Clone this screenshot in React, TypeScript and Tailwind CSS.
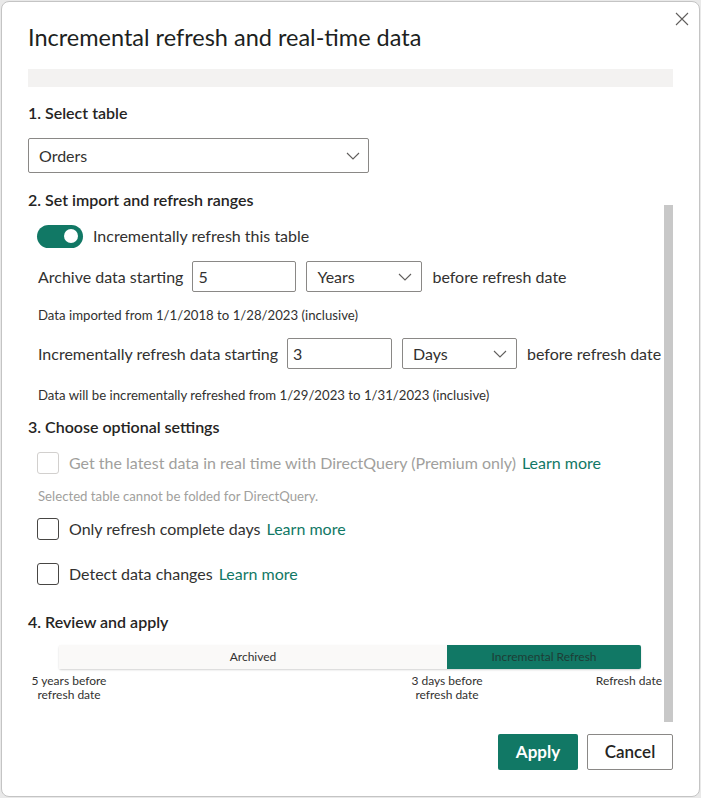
import React from 'react';

const font = { fontFamily: 'Lato, "Noto Sans", sans-serif' };

function Chevron() {
  return (
    <svg width="14" height="8" viewBox="0 0 14 8" className="text-[#605e5c]" aria-hidden="true">
      <path d="M1 1l6 6 6-6" fill="none" stroke="currentColor" strokeWidth="1.1" />
    </svg>
  );
}

function Select({ value, w }: { value: string; w: string }) {
  return (
    <div className={`${w} h-[31px] border border-[#8a8886] rounded-[2px] flex items-center justify-between pl-[10px] pr-[9px] text-[16px] text-[#323130]`}>
      <span>{value}</span>
      <Chevron />
    </div>
  );
}

function NumInput({ value, w }: { value: string; w: string }) {
  return (
    <div className={`${w} h-[31px] border border-[#8a8886] rounded-[2px] flex items-center pl-[5px] text-[16px] text-[#323130]`}>
      {value}
    </div>
  );
}

function Checkbox({ disabled }: { disabled?: boolean }) {
  return (
    <div
      className={`w-[22px] h-[22px] rounded-[3px] border shrink-0 ${
        disabled ? 'border-[#d2d0ce]' : 'border-[#484644]'
      }`}
    />
  );
}

function LearnMore() {
  return <span className="text-[#117865] ml-[6px]">Learn more</span>;
}

export default function App() {
  return (
    <div className="w-[701px] h-[798px] bg-[#e9e9e9] p-px" style={font}>
      <div className="relative w-[699px] h-[796px] bg-white border border-[#c4c4c4] rounded-[8px] pl-[26px] text-[#252423]">
        {/* close */}
        <button className="absolute top-[8px] right-[8px] w-[18px] h-[18px] flex items-center justify-center text-[#605e5c]">
          <svg width="14" height="14" viewBox="0 0 14 14" aria-hidden="true">
            <path d="M1 1l12 12M13 1L1 13" stroke="currentColor" strokeWidth="1.1" />
          </svg>
        </button>

        {/* scrollbar thumb */}
        <div className="absolute top-[203px] left-[662px] w-[9px] h-[517px] bg-[#c8c8c8]" />

        <h1 className="mt-[21px] text-[23.5px] leading-[28px] text-[#201f1e]">Incremental refresh and real-time data</h1>
        <div className="mt-[18px] w-[645px] h-[18px] bg-[#f3f2f1]" />

        {/* 1 */}
        <h2 className="mt-[14px] text-[16px] leading-[24px] font-semibold text-[#252423]">1. Select table</h2>
        <div className="mt-[13px] w-[341px] h-[35px] border border-[#8a8886] rounded-[2px] flex items-center justify-between pl-[10px] pr-[8px] text-[16px] text-[#323130]">
          <span>Orders</span>
          <Chevron />
        </div>

        {/* 2 */}
        <h2 className="mt-[15px] text-[16px] leading-[24px] font-semibold">2. Set import and refresh ranges</h2>
        <div className="mt-[12px] ml-[9px] h-[24px] flex items-center gap-[10px] text-[16px] text-[#323130]">
          <div className="w-[46px] h-[23px] rounded-full bg-[#117865] flex items-center justify-end pr-[5px]">
            <div className="w-[14px] h-[14px] rounded-full bg-white" />
          </div>
          <span>Incrementally refresh this table</span>
        </div>

        <div className="mt-[13px] ml-[10px] h-[31px] flex items-center text-[16px] text-[#323130]">
          <span className="mr-[9px]">Archive data starting</span>
          <NumInput value="5" w="w-[104px]" />
          <div className="ml-[10px]"><Select value="Years" w="w-[116px]" /></div>
          <span className="ml-[10px]">before refresh date</span>
        </div>
        <p className="mt-[13px] ml-[10px] text-[13.2px] leading-[20px] text-[#323130]">Data imported from 1/1/2018 to 1/28/2023 (inclusive)</p>

        <div className="mt-[13px] ml-[10px] h-[31px] flex items-center text-[16px] text-[#323130]">
          <span className="mr-[9px]">Incrementally refresh data starting</span>
          <NumInput value="3" w="w-[105px]" />
          <div className="ml-[10px]"><Select value="Days" w="w-[115px]" /></div>
          <span className="ml-[10px]">before refresh date</span>
        </div>
        <p className="mt-[16px] ml-[10px] text-[13.2px] leading-[20px] text-[#323130]">Data will be incrementally refreshed from 1/29/2023 to 1/31/2023 (inclusive)</p>

        {/* 3 */}
        <h2 className="mt-[10px] text-[16px] leading-[24px] font-semibold">3. Choose optional settings</h2>
        <div className="mt-[13px] ml-[9px] h-[22px] flex items-center text-[16px]">
          <Checkbox disabled />
          <span className="ml-[10px] text-[#a19f9d]">Get the latest data in real time with DirectQuery (Premium only)</span>
          <LearnMore />
        </div>
        <p className="mt-[12px] ml-[10px] text-[13.2px] leading-[20px] text-[#a19f9d]">Selected table cannot be folded for DirectQuery.</p>
        <div className="mt-[12px] ml-[9px] h-[22px] flex items-center text-[16px] text-[#323130]">
          <Checkbox />
          <span className="ml-[10px]">Only refresh complete days</span>
          <LearnMore />
        </div>
        <div className="mt-[23px] ml-[9px] h-[22px] flex items-center text-[16px] text-[#323130]">
          <Checkbox />
          <span className="ml-[10px]">Detect data changes</span>
          <LearnMore />
        </div>

        {/* 4 */}
        <h2 className="mt-[25px] text-[16px] leading-[24px] font-semibold">4. Review and apply</h2>
        <div className="mt-[11px] ml-[31px] w-[582px] h-[24px] flex text-[12px] shadow-[0_1px_2px_rgba(0,0,0,0.18)] rounded-[2px]">
          <div className="w-[388px] bg-[#faf9f8] flex items-center justify-center text-[#323130]">Archived</div>
          <div className="flex-1 bg-[#117865] flex items-center justify-center text-[#1e3d36] rounded-r-[2px]">Incremental Refresh</div>
        </div>
        <div className="mt-[5px] w-[634px] flex text-[12px] leading-[14px] text-[#323130]">
          <div className="w-[82px] text-center">5 years before<br />refresh date</div>
          <div className="ml-[296px] w-[82px] text-center">3 days before<br />refresh date</div>
          <div className="flex-1 text-right">Refresh date</div>
        </div>

        <div className="mt-[32px] w-[645px] flex justify-end gap-[9px]">
          <button className="w-[80px] h-[36px] bg-[#117865] text-white text-[17px] font-bold rounded-[2px]">Apply</button>
          <button className="w-[86px] h-[36px] border border-[#8a8886] bg-white text-[#252423] text-[17px] font-semibold rounded-[2px]">Cancel</button>
        </div>
      </div>
    </div>
  );
}
